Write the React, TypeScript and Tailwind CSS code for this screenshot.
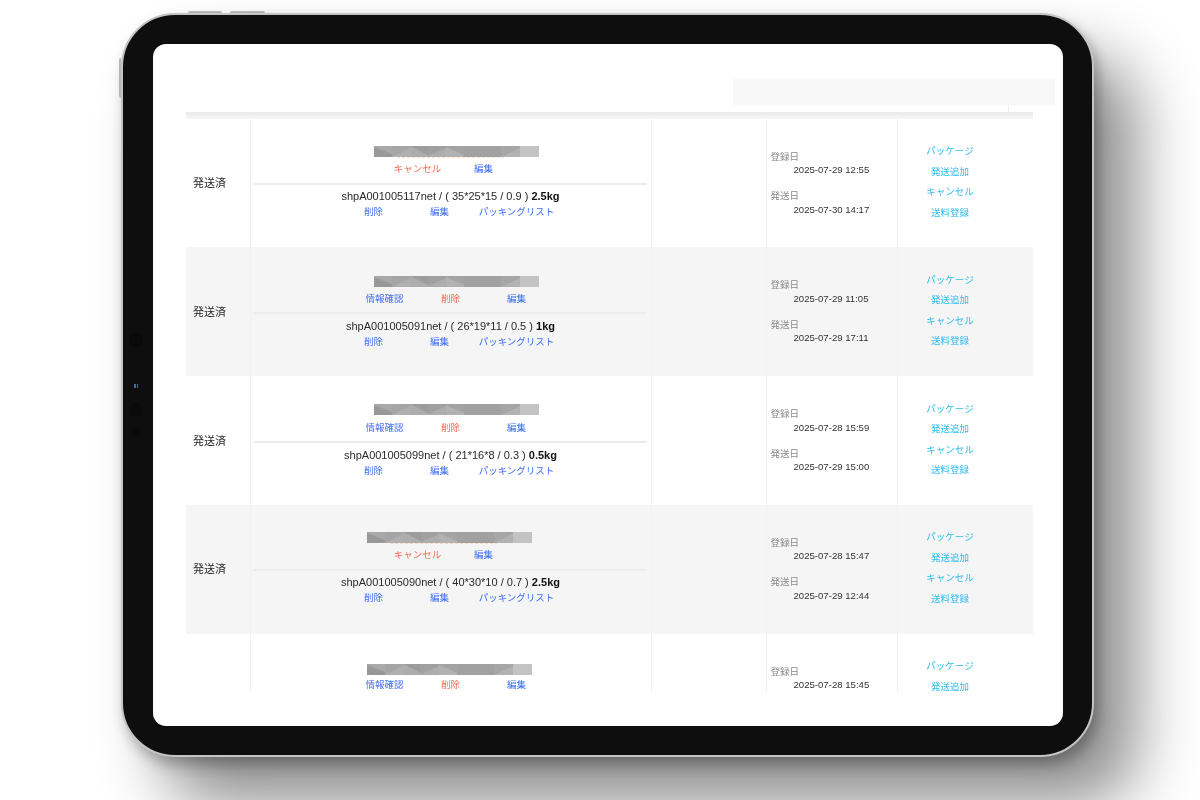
import React from "react";

const jp = `font-["Liberation_Sans","Noto_Sans_CJK_JP",sans-serif]`;

type Row = {
  date1: string;
  date2?: string;
  shp?: string;
  dims?: string;
  kg?: string;
  links: "cancel" | "info";
  barClass: string;
  shade: boolean;
  clip?: boolean;
};

const rows: Row[] = [
  { date1: "2025-07-29 12:55", date2: "2025-07-30 14:17", shp: "shpA001005117net", dims: "35*25*15 / 0.9", kg: "2.5kg", links: "cancel", barClass: "pt-[27px] pb-[5.5px] pl-[123.5px]", shade: false },
  { date1: "2025-07-29 11:05", date2: "2025-07-29 17:11", shp: "shpA001005091net", dims: "26*19*11 / 0.5", kg: "1kg", links: "info", barClass: "pt-[29px] pb-[4.5px] pl-[123.5px]", shade: true },
  { date1: "2025-07-28 15:59", date2: "2025-07-29 15:00", shp: "shpA001005099net", dims: "21*16*8 / 0.3", kg: "0.5kg", links: "info", barClass: "pt-[28px] pb-[5.5px] pl-[123.5px]", shade: false },
  { date1: "2025-07-28 15:47", date2: "2025-07-29 12:44", shp: "shpA001005090net", dims: "40*30*10 / 0.7", kg: "2.5kg", links: "cancel", barClass: "pt-[27px] pb-[5.5px] pl-[116.5px]", shade: true },
  { date1: "2025-07-28 15:45", links: "info", barClass: "pt-[30px] pb-[3.5px] pl-[116.5px]", shade: false, clip: true },
];

// pixelated address strip
const MosaicBar = ({ peek }: { peek: boolean }) => (
  <svg width="165" height="12" viewBox="0 0 165 12" className="block">
    <rect width="165" height="11" fill="#a6a6a6" />
    <rect x="0" width="18" height="11" fill="#a9a9a9" />
    <polygon points="0,1 18,8 18,11 0,11" fill="#989898" />
    <rect x="18" width="18" height="11" fill="#a5a5a5" />
    <polygon points="18,11 36,2 36,11" fill="#b0b0b0" />
    <rect x="36" width="18" height="11" fill="#adadad" />
    <polygon points="36,0 54,0 54,9" fill="#9c9c9c" />
    <rect x="54" width="18" height="11" fill="#a0a0a0" />
    <polygon points="54,10 72,2 72,11 54,11" fill="#adadad" />
    <rect x="72" width="18" height="11" fill="#a3a3a3" />
    <polygon points="72,1 90,9 90,11 72,11" fill="#b2b2b2" />
    <rect x="90" width="37" height="11" fill="#a1a1a1" />
    <rect x="127" width="19" height="11" fill="#a6a6a6" />
    <polygon points="127,11 146,2 146,11" fill="#b2b2b2" />
    <rect x="146" width="19" height="11" fill="#c3c3c3" />
    {peek && <line x1="23" y1="11.5" x2="130" y2="11.5" stroke="#f5b98f" strokeWidth="1" strokeDasharray="3 2" opacity="0.45" />}
  </svg>
);

const TopLinks = ({ kind }: { kind: Row["links"] }) => (
  <div className="flex justify-center text-[9.5px] leading-[12px] text-center">
    {kind === "cancel" ? (
      <>
        <span className="w-[66px] text-[#f8694f]">キャンセル</span>
        <span className="w-[66px] text-[#3f6ff5]">編集</span>
      </>
    ) : (
      <>
        <span className="w-[66px] text-[#3f6ff5]">情報確認</span>
        <span className="w-[66px] text-[#f8694f]">削除</span>
        <span className="w-[66px] text-[#3f6ff5]">編集</span>
      </>
    )}
  </div>
);

const TableRow = ({ row }: { row: Row }) => (
  <div className={`grid grid-cols-[64px_401px_115px_131px_136px] shrink-0 h-[128.75px] ${row.shade ? "bg-[#f5f5f5]" : "bg-white"}`}>
    <div className="flex items-center pl-[7.5px] pt-[1px] text-[11px] text-[#2a2a2a]">{!row.clip && "発送済"}</div>

    <div className="border-l border-[#f1f1f1]">
      <div className={row.barClass}>
        <MosaicBar peek={row.links === "cancel"} />
      </div>
      <TopLinks kind={row.links} />
      {row.shp && (
        <>
          <div className="mt-[7.5px] ml-[3px] mr-[4px] border-t-2 border-[#ececec]" />
          <div className="mt-[4.5px] text-center text-[11px] leading-[14px] text-[#2a2a2a]">
            {row.shp} / ( {row.dims} ) <b className="text-[#111]">{row.kg}</b>
          </div>
          <div className="flex mt-[3px] pl-[90px] text-[9.5px] leading-[12px] text-center text-[#3f6ff5]">
            <span className="w-[66px]">削除</span>
            <span className="w-[66px]">編集</span>
            <span className="w-[88px]">パッキングリスト</span>
          </div>
        </>
      )}
    </div>

    <div className="border-l border-[#f1f1f1]" />

    <div className="border-l border-[#f1f1f1] pl-[4px] pt-[31px] text-[9.6px] leading-[13.5px]">
      <div className="text-[#8a8a8a] text-[9.5px]">登録日</div>
      <div className="pl-[23px] text-[#333]">{row.date1}</div>
      {row.date2 && (
        <>
          <div className="mt-[12.5px] text-[#8a8a8a] text-[9.5px]">発送日</div>
          <div className="pl-[23px] text-[#333]">{row.date2}</div>
        </>
      )}
    </div>

    <div className="border-l border-[#f1f1f1] pr-[30px] pt-[26.5px] text-center text-[9.5px] leading-[12px] text-[#2fbbef] flex flex-col gap-[8.5px]">
      <span>パッケージ</span>
      <span>発送追加</span>
      {!row.clip && <span>キャンセル</span>}
      {!row.clip && <span>送料登録</span>}
    </div>
  </div>
);

export default function App() {
  return (
    <div className={`w-[1200px] h-[800px] overflow-hidden bg-white pl-[121px] pt-[13px] ${jp}`}>
      <div className="relative w-[973px] h-[744px] rounded-[54px] bg-[#0e0e0e] border-[2.5px] border-[#c4c4c4] pl-[29.5px] pt-[28.5px] shadow-[4px_8px_14px_rgba(0,0,0,0.28),42px_46px_65px_rgba(0,0,0,0.45)]">
        {/* hardware buttons */}
        <div className="absolute top-[-4px] left-[65px] w-[34px] h-[1.5px] rounded-t bg-[#b5b5b5]" />
        <div className="absolute top-[-4px] left-[107px] w-[35px] h-[1.5px] rounded-t bg-[#b5b5b5]" />
        <div className="absolute top-[43px] left-[-4px] w-[1.5px] h-[40px] rounded-l bg-[#b5b5b5]" />

        {/* camera dots */}
        <div className="absolute left-[5.5px] top-[317.5px] w-[14px] h-[14px] rounded-full bg-[#0a0a0a]" />
        <div className="absolute left-[11px] top-[369px] flex gap-[1px]">
          <span className="w-[1.5px] h-[4px] bg-[#2f6fc4]" />
          <span className="w-[1.5px] h-[4px] bg-[#2f6fc4]" />
        </div>
        <div className="absolute left-[5.5px] top-[387.5px] w-[14px] h-[14px] rounded-full bg-[#0a0a0a]" />
        <div className="absolute left-[7.5px] top-[411.5px] w-[10px] h-[10px] rounded-full bg-[#090909]" />

        {/* screen */}
        <div className="w-[910px] h-[682px] rounded-[13px] bg-white overflow-hidden pt-[35px] blur-[0.35px]">
          <div className="flex justify-end pr-[8px]">
            <div className="w-[322px] h-[26px] bg-[#f8f8f8]" />
          </div>
          <div className="ml-[33px] w-[847px]">
            <div className="flex justify-end pr-[24px] h-[7px]">
              <div className="w-px h-full bg-[#eeeeee]" />
            </div>
            <div className="h-[7px] bg-gradient-to-b from-[#e9e9e9] to-[#f7f7f7]" />
            <div className="h-[573px] overflow-hidden flex flex-col">
              {rows.map((r) => (
                <TableRow key={r.date1} row={r} />
              ))}
            </div>
          </div>
        </div>
      </div>
    </div>
  );
}
